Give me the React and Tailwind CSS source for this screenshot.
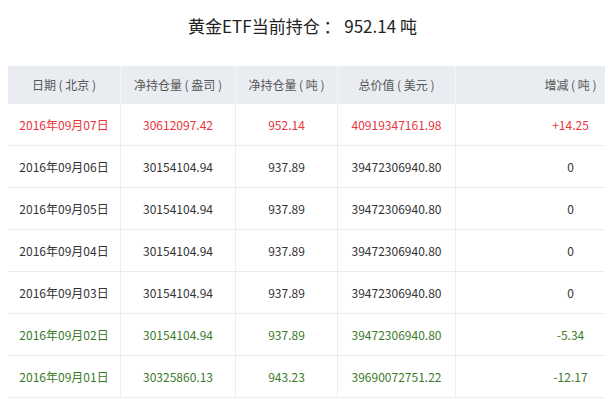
import React from 'react';

const rows = [
  ['2016年09月07日', '30612097.42', '952.14', '40919347161.98', '+14.25', 'red'],
  ['2016年09月06日', '30154104.94', '937.89', '39472306940.80', '0', ''],
  ['2016年09月05日', '30154104.94', '937.89', '39472306940.80', '0', ''],
  ['2016年09月04日', '30154104.94', '937.89', '39472306940.80', '0', ''],
  ['2016年09月03日', '30154104.94', '937.89', '39472306940.80', '0', ''],
  ['2016年09月02日', '30154104.94', '937.89', '39472306940.80', '-5.34', 'green'],
  ['2016年09月01日', '30325860.13', '943.23', '39690072751.22', '-12.17', 'green'],
];

const widths = ['w-[113px]', 'w-[115px]', 'w-[102px]', 'w-[118px]', 'w-[230px]'];
const heads = ['日期 ( 北京 )', '净持仓量 ( 盎司 )', '净持仓量 ( 吨 )', '总价值 ( 美元 )', '增减 ( 吨 )'];

const color = { red: 'text-[#e8343a]', green: 'text-[#3b7a2a]', '': 'text-[#333]' };

export default function App() {
  return (
    <div className="w-[605px] h-[400px] overflow-hidden bg-white" style={{ fontFamily: '"Microsoft YaHei", "Noto Sans CJK SC", sans-serif' }}>
      <div className="h-[66px] pt-[13px] text-center text-[17px] text-[#222]">黄金ETF当前持仓 ： 952.14 吨</div>
      <div className="ml-[8px] w-[700px] text-[12px]">
        <div className="flex h-[38px] bg-[#e9edf2] text-[#555]">
          {heads.map((h, i) => (
            <div key={i} className={`${widths[i]} shrink-0 flex items-center justify-center border-r border-[#f4f4f4]`}>{h}</div>
          ))}
        </div>
        {rows.map((r, ri) => (
          <div key={ri} className={`flex h-[42px] border-b border-[#ececec] ${color[r[5]]}`}>
            {r.slice(0, 5).map((c, i) => (
              <div key={i} className={`${widths[i]} shrink-0 flex items-center justify-center border-r border-[#ececec]`}>{c}</div>
            ))}
          </div>
        ))}
      </div>
    </div>
  );
}
